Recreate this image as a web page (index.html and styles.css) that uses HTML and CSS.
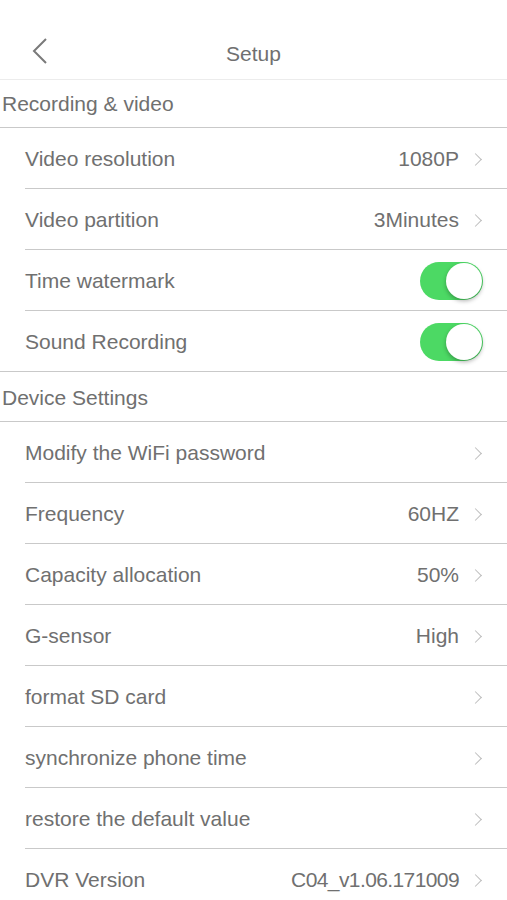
FILE: index.html
```html
<!DOCTYPE html>
<html>
<head>
<meta charset="utf-8">
<link rel="stylesheet" href="styles.css">
</head>
<body>
<div class="page">
  <header class="topbar">
    <svg class="back" width="16" height="28" viewBox="0 0 16 28"><path d="M14 2 L2 14 L14 26" fill="none" stroke="#7a7a7a" stroke-width="2"/></svg>
    <div class="title">Setup</div>
  </header>

  <section class="group">
    <div class="group-title">Recording &amp; video</div>
    <div class="rows">
      <div class="row"><span class="label">Video resolution</span><span class="value">1080P</span><span class="chev"></span></div>
      <div class="row"><span class="label">Video partition</span><span class="value">3Minutes</span><span class="chev"></span></div>
      <div class="row"><span class="label">Time watermark</span><span class="toggle on"></span></div>
      <div class="row"><span class="label">Sound Recording</span><span class="toggle on"></span></div>
    </div>
  </section>

  <section class="group">
    <div class="group-title">Device Settings</div>
    <div class="rows">
      <div class="row"><span class="label">Modify the WiFi password</span><span class="value"></span><span class="chev"></span></div>
      <div class="row"><span class="label">Frequency</span><span class="value">60HZ</span><span class="chev"></span></div>
      <div class="row"><span class="label">Capacity allocation</span><span class="value">50%</span><span class="chev"></span></div>
      <div class="row"><span class="label">G-sensor</span><span class="value">High</span><span class="chev"></span></div>
      <div class="row"><span class="label">format SD card</span><span class="value"></span><span class="chev"></span></div>
      <div class="row"><span class="label">synchronize phone time</span><span class="value"></span><span class="chev"></span></div>
      <div class="row"><span class="label">restore the default value</span><span class="value"></span><span class="chev"></span></div>
      <div class="row"><span class="label">DVR Version</span><span class="value version">C04_v1.06.171009</span><span class="chev"></span></div>
    </div>
  </section>
</div>
</body>
</html>
```

FILE: styles.css
```css
* { box-sizing: border-box; }
html, body { margin: 0; padding: 0; background: #fff; }
body {
  font-family: "Liberation Sans", Arial, sans-serif;
  color: #707070;
  font-size: 21px;
}
.page { width: 507px; }
.topbar {
  height: 80px;
  border-bottom: 1px solid #ececec;
  display: flex;
  align-items: center;
  justify-content: center;
  position: relative;
  padding-top: 28px;
}
.back { position: absolute; left: 32px; top: 37px; }
.title { font-size: 21px; color: #707070; }
.group-title {
  height: 48px;
  display: flex;
  align-items: center;
  padding-left: 2px;
  border-bottom: 1px solid #c9c9c9;
}
.group + .group .group-title { height: 50px; padding-top: 2px; }
.rows {
  padding-left: 25px;
  border-bottom: 1px solid #c9c9c9;
}
.row {
  height: 61px;
  display: flex;
  align-items: center;
  padding-right: 24px;
  padding-top: 2px;
  border-bottom: 1px solid #c9c9c9;
}
.row:last-child { border-bottom: none; height: 60px; }
.label { flex: 1; }
.value { margin-right: 12px; }
.version { letter-spacing: -0.6px; }
.chev {
  width: 9px; height: 9px;
  border-top: 1.5px solid #bdbdbd;
  border-right: 1.5px solid #bdbdbd;
  transform: rotate(45deg);
  margin-right: 3px;
}
.toggle {
  width: 63px; height: 38px;
  border-radius: 19px;
  background: #4cd964;
  position: relative;
}
.toggle::after {
  content: "";
  position: absolute;
  right: 1px; top: 1px;
  width: 36px; height: 36px;
  border-radius: 50%;
  background: #fff;
  box-shadow: 0 2px 4px rgba(0,0,0,0.3);
}
```
